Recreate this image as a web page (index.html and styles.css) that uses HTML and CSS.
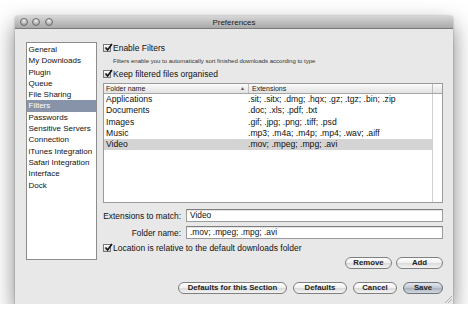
FILE: index.html
```html
<!doctype html>
<html lang="en">
<head>
  <title>Preferences</title>
  <meta charset="utf-8">
  <link rel="stylesheet" href="styles.css">
</head>
<body>
<div class="window">
  <div class="titlebar">
    <div class="lights">
      <span class="light"></span>
      <span class="light"></span>
      <span class="light"></span>
    </div>
    <div class="title">Preferences</div>
  </div>

  <div class="content">
    <ul class="sidebar">
      <li>General</li>
      <li>My Downloads</li>
      <li>Plugin</li>
      <li>Queue</li>
      <li>File Sharing</li>
      <li class="selected">Filters</li>
      <li>Passwords</li>
      <li>Sensitive Servers</li>
      <li>Connection</li>
      <li>iTunes Integration</li>
      <li>Safari Integration</li>
      <li>Interface</li>
      <li>Dock</li>
    </ul>

    <div class="panel">
      <div class="check">
        <span class="box"><svg width="9" height="9" viewBox="0 0 9 9"><path d="M1.5 4.5 L3.6 7 L8 1" fill="none" stroke="#111" stroke-width="1.6"/></svg></span>
        Enable Filters
      </div>
      <p class="hint">Filters enable you to automatically sort finished downloads according to type</p>
      <div class="check check-second">
        <span class="box"><svg width="9" height="9" viewBox="0 0 9 9"><path d="M1.5 4.5 L3.6 7 L8 1" fill="none" stroke="#111" stroke-width="1.6"/></svg></span>
        Keep filtered files organised
      </div>

      <div class="table">
        <div class="thead">
          <div class="th th-name">Folder name <span class="sort">▲</span></div>
          <div class="th th-ext">Extensions</div>
          <div class="th th-corner"></div>
        </div>
        <div class="tbody">
          <div class="rows">
            <div class="row"><span class="cell-name">Applications</span><span class="cell-ext">.sit; .sitx; .dmg; .hqx; .gz; .tgz; .bin; .zip</span></div>
            <div class="row"><span class="cell-name">Documents</span><span class="cell-ext">.doc; .xls; .pdf; .txt</span></div>
            <div class="row"><span class="cell-name">Images</span><span class="cell-ext">.gif; .jpg; .png; .tiff; .psd</span></div>
            <div class="row"><span class="cell-name">Music</span><span class="cell-ext">.mp3; .m4a; .m4p; .mp4; .wav; .aiff</span></div>
            <div class="row row-selected"><span class="cell-name">Video</span><span class="cell-ext">.mov; .mpeg; .mpg; .avi</span></div>
          </div>
          <div class="scroll-col"></div>
        </div>
      </div>

      <div class="field field-first">
        <span class="field-label">Extensions to match:</span>
        <span class="input">Video</span>
      </div>
      <div class="field">
        <span class="field-label">Folder name:</span>
        <span class="input">.mov; .mpeg; .mpg; .avi</span>
      </div>

      <div class="check check-third">
        <span class="box"><svg width="9" height="9" viewBox="0 0 9 9"><path d="M1.5 4.5 L3.6 7 L8 1" fill="none" stroke="#111" stroke-width="1.6"/></svg></span>
        Location is relative to the default downloads folder
      </div>

      <div class="buttons buttons-list">
        <button class="btn btn-remove">Remove</button>
        <button class="btn btn-add">Add</button>
      </div>
      <div class="buttons buttons-main">
        <button class="btn btn-section">Defaults for this Section</button>
        <button class="btn btn-defaults">Defaults</button>
        <button class="btn btn-cancel">Cancel</button>
        <button class="btn btn-save">Save</button>
      </div>
    </div>
  </div>
  <div class="grip"></div>
</div>
</body>
</html>
```

FILE: styles.css
```css
body {
  margin: 0;
  background: #ffffff;
  font-family: "Liberation Sans", Arial, sans-serif;
  color: #111;
}

.window {
  position: relative;
  margin-top: 16px;
  margin-left: 15px;
  width: 438px;
  height: 288px;
  background: #e8e8e8;
  box-shadow: 0 9px 22px rgba(0, 0, 0, 0.5), 0 0 2px rgba(0, 0, 0, 0.35);
  border-radius: 3px 3px 0 0;
}

/* title bar */

.titlebar {
  height: 12px;
  display: flex;
  align-items: center;
  position: relative;
  background: linear-gradient(#d6d6d6, #a9a9a9);
  border-bottom: 1px solid #7a7a7a;
  border-radius: 3px 3px 0 0;
}

.lights {
  display: flex;
  gap: 4.5px;
  margin-left: 4.5px;
}

.light {
  width: 8px;
  height: 8px;
  box-sizing: border-box;
  border-radius: 50%;
  border: 1px solid #6f6f6f;
  background: radial-gradient(circle at 50% 30%, #f0f0f0, #b3b3b3 60%, #8e8e8e);
}

.title {
  position: absolute;
  left: 0;
  right: 0;
  text-align: center;
  font-size: 8px;
  color: #222;
}

/* content */

.content {
  display: flex;
  padding-left: 11px;
}

.sidebar {
  list-style: none;
  margin: 13px 0 0 0;
  padding: 1px 0 0 0;
  width: 71px;
  height: 218px;
  box-sizing: border-box;
  background: #fff;
  border: 1px solid #8c8c8c;
  font-size: 8px;
}

.sidebar li {
  height: 11.3px;
  line-height: 11.3px;
  padding-left: 1.5px;
  white-space: nowrap;
}

.sidebar .selected {
  background: #8793a8;
  color: #fff;
}

.panel {
  margin-top: 14px;
  margin-left: 6px;
  width: 340px;
  display: flex;
  flex-direction: column;
}

/* checkboxes */

.check {
  display: flex;
  align-items: center;
  gap: 2px;
  height: 9px;
  font-size: 8.5px;
  white-space: nowrap;
}

.box {
  width: 8px;
  height: 8px;
  box-sizing: border-box;
  border: 1px solid #777;
  background: linear-gradient(#fdfdfd, #d4d4d4);
  position: relative;
}

.box svg {
  position: absolute;
  left: 0;
  top: -2px;
}

.hint {
  margin: 5px 0 0 10px;
  font-size: 6px;
  line-height: 8px;
  color: #333;
}

.check-second {
  margin-top: 4px;
}

.check-third {
  margin-top: 4px;
}

/* table */

.table {
  margin-top: 5px;
  height: 120px;
  box-sizing: border-box;
  border: 1px solid #9a9a9a;
  background: #fff;
  display: flex;
  flex-direction: column;
}

.thead {
  display: flex;
  height: 9px;
  flex-shrink: 0;
  background: linear-gradient(#fbfbfb, #e2e2e2);
  border-bottom: 1px solid #a6a6a6;
  font-size: 7px;
  line-height: 9px;
  color: #222;
}

.th-name {
  width: 145px;
  padding-left: 2px;
  box-sizing: border-box;
  border-right: 1px solid #bdbdbd;
  display: flex;
  justify-content: space-between;
}

.sort {
  font-size: 5px;
  color: #555;
  padding-right: 3px;
}

.th-ext {
  flex: 1;
  padding-left: 3px;
}

.th-corner {
  width: 9px;
  border-left: 1px solid #bdbdbd;
}

.tbody {
  flex: 1;
  display: flex;
}

.rows {
  flex: 1;
}

.scroll-col {
  width: 9px;
  border-left: 1px solid #d0d0d0;
}

.row {
  display: flex;
  height: 11.25px;
  line-height: 11.25px;
  font-size: 8.6px;
  white-space: nowrap;
}

.row-selected {
  background: #d4d4d4;
}

.cell-name {
  width: 144px;
  padding-left: 2px;
  box-sizing: border-box;
}

.cell-ext {
  flex: 1;
  overflow: hidden;
}

/* fields */

.field {
  display: flex;
  align-items: center;
  gap: 5px;
  margin-top: 4px;
  font-size: 8.4px;
}

.field-first {
  margin-top: 6px;
}

.field-label {
  width: 78px;
  text-align: right;
  white-space: nowrap;
}

.input {
  flex: 1;
  height: 13px;
  box-sizing: border-box;
  line-height: 11px;
  padding-left: 3px;
  background: #fff;
  border: 1px solid #9b9b9b;
  border-top-color: #7d7d7d;
  box-shadow: inset 0 1px 1px rgba(0, 0, 0, 0.12);
}

/* buttons */

.buttons {
  display: flex;
  justify-content: flex-end;
}

.buttons-list {
  margin-top: 5px;
  gap: 4px;
}

.buttons-main {
  margin-top: 13px;
  gap: 6px;
}

.btn {
  height: 12px;
  padding: 0;
  margin: 0;
  box-sizing: border-box;
  border: 1px solid #7f7f7f;
  border-radius: 7px;
  background: linear-gradient(#ffffff, #f1f1f1 45%, #dcdcdc 55%, #f4f4f4);
  font-family: "Liberation Sans", Arial, sans-serif;
  font-weight: bold;
  font-size: 7.8px;
  line-height: 10px;
  color: #222;
}

.btn-remove,
.btn-add {
  width: 47px;
}

.btn-section {
  width: 109px;
}

.btn-defaults {
  width: 54px;
}

.btn-cancel {
  width: 44px;
}

.btn-save {
  width: 40px;
  border-color: #6f747c;
  background: linear-gradient(#e3e7ee, #c4cad4 45%, #adb4c0 55%, #d2d8e0);
}

.grip {
  position: absolute;
  right: 1px;
  bottom: 1px;
  width: 7px;
  height: 7px;
  background: linear-gradient(135deg, transparent 45%, #b0b0b0 45%, #b0b0b0 52%, transparent 52%, transparent 70%, #b0b0b0 70%, #b0b0b0 77%, transparent 77%);
}
```
